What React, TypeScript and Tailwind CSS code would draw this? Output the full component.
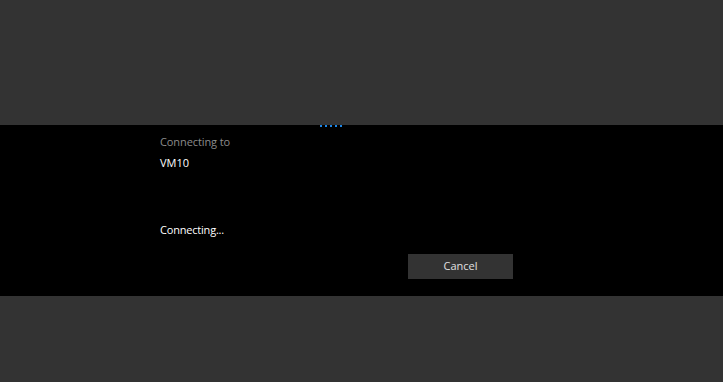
export default function App() {
  return (
    <div className="w-[723px] h-[382px] bg-[#333333] flex flex-col" style={{ fontFamily: '"Open Sans", "Noto Sans", sans-serif' }}>
      <div className="h-[125px]" />
      <div className="relative h-[171px] bg-black">
        <div className="absolute left-[320px] top-0 flex gap-[3px]">
          <div className="w-[2px] h-[2px] bg-[#1a86e8]" />
          <div className="w-[2px] h-[2px] bg-[#1a86e8]" />
          <div className="w-[2px] h-[2px] bg-[#1a86e8]" />
          <div className="w-[2px] h-[2px] bg-[#1a86e8]" />
          <div className="w-[2px] h-[2px] bg-[#1a86e8]" />
        </div>
        <div className="pl-[160px] pt-[9px] flex flex-col">
          <div className="text-[11px] leading-[15px] tracking-[-0.1px] text-[#8c8c8c]">Connecting to</div>
          <div className="mt-[6px] text-[11px] leading-[15px] text-white">VM10</div>
          <div className="mt-[52px] text-[11px] leading-[15px] tracking-[-0.2px] text-white">Connecting...</div>
          <div className="mt-[17px] ml-[248px] w-[105px] h-[25px] bg-[#333333] text-[#e0e0e0] text-[11px] flex items-center justify-center">Cancel</div>
        </div>
      </div>
    </div>
  );
}
